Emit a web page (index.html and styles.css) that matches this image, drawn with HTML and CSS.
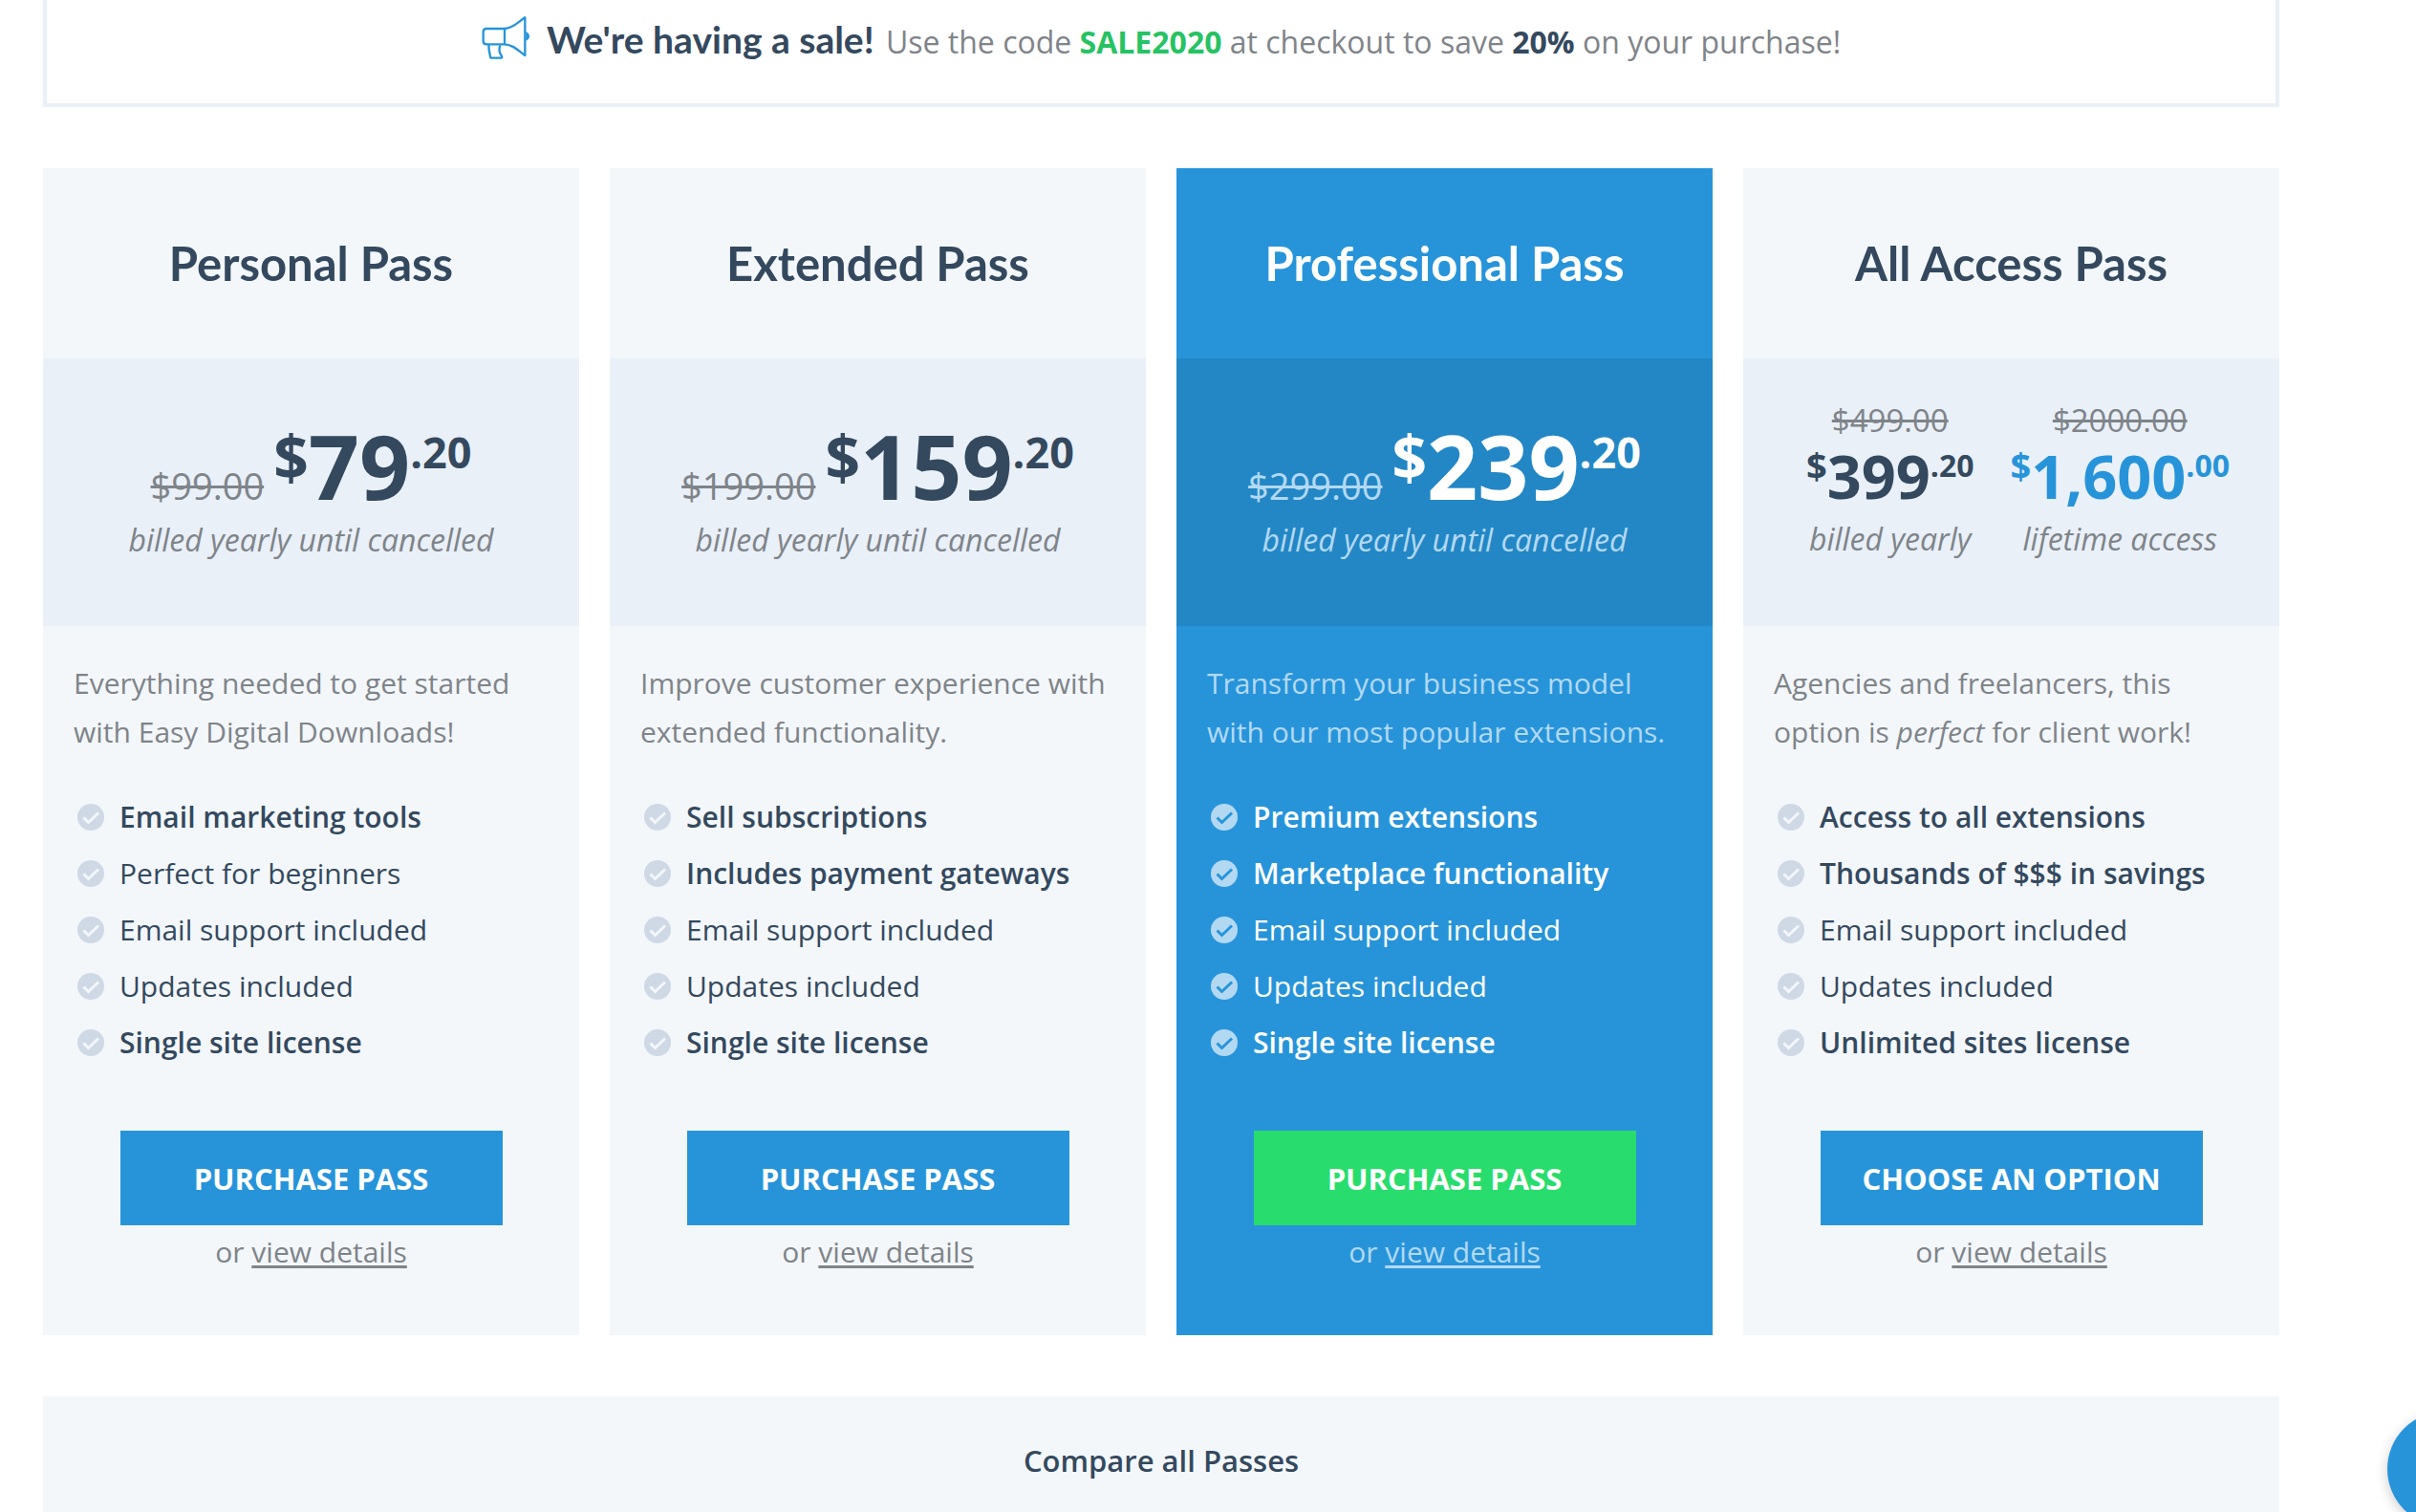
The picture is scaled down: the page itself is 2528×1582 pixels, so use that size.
FILE: index.html
```html
<!DOCTYPE html>
<html lang="en">
<head>
    <meta charset="UTF-8">
    <meta name="viewport" content="width=device-width, initial-scale=1.0">
    <title>Passes</title>
    <link rel="stylesheet" href="styles.css">
</head>
<body>
    <!-- shared check icon for the feature lists -->
    <svg class="sprite" aria-hidden="true">
        <symbol id="check" viewBox="0 0 28 28">
            <circle class="check-disc" cx="14" cy="14" r="14"/>
            <path class="check-mark" d="M6.500 14.500 L11.500 19.500 L22 9.500"/>
        </symbol>
    </svg>

    <div class="container">
        <div class="sale">
            <svg class="megaphone" viewBox="54 48 156 144" aria-hidden="true">
                <path d="M126 90 H69 Q59 90 59 100 V129 Q59 139 69 139 H126 Z"/>
                <path d="M126 90 C153 88 167 70 190 55 V174 C168 158 153 141 126 139"/>
                <path d="M76 141 C76 158 79 168 82 181 Q83 182 85 182 H116 Q120 180 115 173 C109 165 108 153 112 142"/>
                <path class="fill" d="M193 99 Q204 105 204 114 Q204 123 193 128 Z"/>
            </svg>
            <p><strong class="sale-title">We're having a sale!</strong> Use the code <strong class="code">SALE2020</strong> at checkout to save <strong class="percent">20%</strong> on your purchase!</p>
        </div>

        <div class="passes">
            <section class="pass">
                <h2>Personal Pass</h2>
                <div class="pricing">
                    <div class="price"><del>$99.00</del><span class="amount"><span class="currency">$</span>79<span class="cents">.20</span></span></div>
                    <p class="billing">billed yearly until cancelled</p>
                </div>
                <div class="details">
                    <p class="summary">Everything needed to get started with Easy Digital Downloads!</p>
                    <ul>
                        <li><svg><use href="#check"/></svg><strong>Email marketing tools</strong></li>
                        <li><svg><use href="#check"/></svg>Perfect for beginners</li>
                        <li><svg><use href="#check"/></svg>Email support included</li>
                        <li><svg><use href="#check"/></svg>Updates included</li>
                        <li><svg><use href="#check"/></svg><strong>Single site license</strong></li>
                    </ul>
                    <button type="button" class="buy">PURCHASE PASS</button>
                    <p class="more">or <a href="#personal">view details</a></p>
                </div>
            </section>

            <section class="pass">
                <h2>Extended Pass</h2>
                <div class="pricing">
                    <div class="price"><del>$199.00</del><span class="amount"><span class="currency">$</span>159<span class="cents">.20</span></span></div>
                    <p class="billing">billed yearly until cancelled</p>
                </div>
                <div class="details">
                    <p class="summary">Improve customer experience with extended functionality.</p>
                    <ul>
                        <li><svg><use href="#check"/></svg><strong>Sell subscriptions</strong></li>
                        <li><svg><use href="#check"/></svg><strong>Includes payment gateways</strong></li>
                        <li><svg><use href="#check"/></svg>Email support included</li>
                        <li><svg><use href="#check"/></svg>Updates included</li>
                        <li><svg><use href="#check"/></svg><strong>Single site license</strong></li>
                    </ul>
                    <button type="button" class="buy">PURCHASE PASS</button>
                    <p class="more">or <a href="#extended">view details</a></p>
                </div>
            </section>

            <section class="pass featured">
                <h2>Professional Pass</h2>
                <div class="pricing">
                    <div class="price"><del>$299.00</del><span class="amount"><span class="currency">$</span>239<span class="cents">.20</span></span></div>
                    <p class="billing">billed yearly until cancelled</p>
                </div>
                <div class="details">
                    <p class="summary">Transform your business model with our most popular extensions.</p>
                    <ul>
                        <li><svg><use href="#check"/></svg><strong>Premium extensions</strong></li>
                        <li><svg><use href="#check"/></svg><strong>Marketplace functionality</strong></li>
                        <li><svg><use href="#check"/></svg>Email support included</li>
                        <li><svg><use href="#check"/></svg>Updates included</li>
                        <li><svg><use href="#check"/></svg><strong>Single site license</strong></li>
                    </ul>
                    <button type="button" class="buy">PURCHASE PASS</button>
                    <p class="more">or <a href="#professional">view details</a></p>
                </div>
            </section>

            <section class="pass">
                <h2>All Access Pass</h2>
                <div class="pricing options">
                    <div class="option">
                        <del>$499.00</del>
                        <span class="amount"><span class="currency">$</span>399<span class="cents">.20</span></span>
                        <p class="billing">billed yearly</p>
                    </div>
                    <div class="option lifetime">
                        <del>$2000.00</del>
                        <span class="amount"><span class="currency">$</span>1,600<span class="cents">.00</span></span>
                        <p class="billing">lifetime access</p>
                    </div>
                </div>
                <div class="details">
                    <p class="summary">Agencies and freelancers, this option is <em>perfect</em> for client work!</p>
                    <ul>
                        <li><svg><use href="#check"/></svg><strong>Access to all extensions</strong></li>
                        <li><svg><use href="#check"/></svg><strong>Thousands of $$$ in savings</strong></li>
                        <li><svg><use href="#check"/></svg>Email support included</li>
                        <li><svg><use href="#check"/></svg>Updates included</li>
                        <li><svg><use href="#check"/></svg><strong>Unlimited sites license</strong></li>
                    </ul>
                    <button type="button" class="buy">CHOOSE AN OPTION</button>
                    <p class="more">or <a href="#all-access">view details</a></p>
                </div>
            </section>
        </div>

        <div class="compare">
            <h3>Compare all Passes</h3>
        </div>
    </div>

    <button type="button" class="chat" aria-label="Open chat"></button>
</body>
</html>
```
FILE: styles.css
```css
* { box-sizing: border-box; }
body { margin: 0; padding: 0 143px 0 45px; background: #fff; color: #7f8489; font-family: "Open Sans", sans-serif; font-size: 30px; line-height: 51px; overflow-x: hidden; }
h2, h3, p, ul { margin: 0; padding: 0; }
strong { font-weight: 600; }
.sprite { display: none; }

/* sale banner */
.sale { display: flex; justify-content: center; gap: 16px; padding: 16px 20px 39px; border: 4px solid #e9f0f8; border-top: none; font-size: 32px; line-height: 50px; }
.sale strong { font-weight: 700; }
.megaphone { width: 52px; height: 48px; flex: none; fill: none; stroke: #2794da; stroke-width: 7; stroke-linejoin: round; }
.megaphone .fill { fill: #2794da; stroke: none; }
.sale .sale-title { margin-right: 4px; color: #34495e; font-family: Lato, sans-serif; font-size: 39px; font-weight: 700; }
.code { color: #27c263; }
.percent { color: #34495e; }

/* pass cards */
.passes { display: grid; grid-template-columns: repeat(4, 1fr); gap: 32px; margin: 64px 0; }
.pass { --disc: #cfd9e6; --mark: #f3f7fa; background: #f3f7fa; }
.pass h2 { padding: 70px 20px; color: #34495e; font-family: Lato, sans-serif; font-size: 49px; line-height: 59px; text-align: center; }
.pricing { height: 280px; padding-top: 66px; background: #e9f0f8; text-align: center; }
.price { display: flex; justify-content: center; align-items: baseline; gap: 10px; }
.price del { font-size: 38px; }
del { text-decoration-thickness: 3px; }
.amount { color: #34495e; font-size: 93px; font-weight: 700; line-height: 92px; }
.currency { font-size: 64px; line-height: 0; vertical-align: 21px; }
.cents { font-size: 45px; line-height: 0; vertical-align: 33px; }
.billing { margin-top: 5px; font-size: 32px; font-style: italic; }

.options { display: flex; justify-content: center; gap: 38px; padding: 42px 0 0 14px; }
.option { display: flex; flex-direction: column; align-items: center; }
.option del { font-size: 33px; line-height: 46px; }
.option .amount { font-size: 63px; line-height: 70px; }
.option .currency { font-size: 38px; vertical-align: 20px; }
.option .cents { font-size: 32px; vertical-align: 23px; }
.lifetime .amount { color: #2794da; }

.details { padding: 34px 32px 62px; text-align: center; }
.summary { text-align: left; }
.details ul { margin: 34px 0 63px; list-style: none; color: #34495e; text-align: left; }
.details li { display: flex; align-items: center; gap: 16px; padding-left: 4px; line-height: 59px; }
.details li svg { width: 28px; height: 28px; flex: none; }
.check-disc { fill: var(--disc); }
.check-mark { fill: none; stroke: var(--mark); stroke-width: 3; }
.buy { display: block; width: 400px; max-width: 100%; height: 99px; margin: 0 auto 2px; border: none; background: #2794da; color: #fff; font-family: inherit; font-size: 31px; font-weight: 700; cursor: pointer; }
.more a { color: inherit; text-underline-offset: 3px; text-decoration-thickness: 3px; text-decoration-skip-ink: none; }

/* highlighted card */
.featured { --disc: #b3d9f2; --mark: #2794da; background: #2794da; color: #b3d9f2; }
.featured h2, .featured .amount, .featured ul { color: #fff; }
.featured .pricing { background: #2387c5; }
.featured .buy { background: #28dd6d; }

.compare { padding: 42px 20px 40px; background: #f3f7fa; color: #34495e; text-align: center; }
.compare h3 { font-size: 31px; font-weight: 600; }

.chat { position: fixed; right: -90px; bottom: -15px; width: 120px; height: 120px; padding: 0; border: none; border-radius: 50%; background: #2794da; box-shadow: 0 4px 14px rgba(0,0,0,0.2); cursor: pointer; }
```
